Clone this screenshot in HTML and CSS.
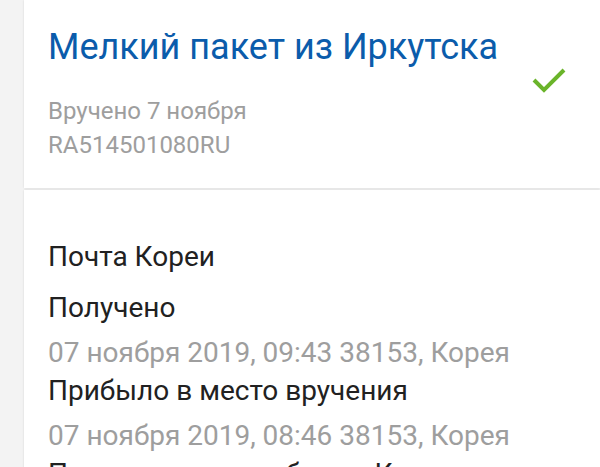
FILE: index.html
```html
<!DOCTYPE html>
<html lang="ru">
<head>
  <meta charset="UTF-8">
  <meta name="viewport" content="width=device-width, initial-scale=1.0">
  <title>Отслеживание</title>
  <link rel="stylesheet" href="styles.css">
</head>
<body>

  <div class="page">
    <div class="card head">
      <div class="info">
        <h1>Мелкий пакет из Иркутска</h1>
        <p class="sub">Вручено 7 ноября</p>
        <p class="sub">RA514501080RU</p>
      </div>
      <svg class="check" width="34" height="26" viewBox="0 0 34 26">
        <path d="M2 13 L12 23 L32 3" fill="none" stroke="#6ab42a" stroke-width="4"/>
      </svg>
    </div>

    <div class="card history">
      <h2>Почта Кореи</h2>
      <div class="event">
        <div class="what">Получено</div>
        <div class="when">07 ноября 2019, 09:43 38153, Корея</div>
      </div>
      <div class="event">
        <div class="what">Прибыло в место вручения</div>
        <div class="when">07 ноября 2019, 08:46 38153, Корея</div>
      </div>
      <div class="event">
        <div class="what">Покинуло место обмена Кореи</div>
        <div class="when">07 ноября 2019, 02:10 38153, Корея</div>
      </div>
    </div>
  </div>

</body>
</html>
```

FILE: styles.css
```css
* {
  margin: 0;
  padding: 0;
  box-sizing: border-box;
}
body {
  font-family: Roboto, "Noto Sans", sans-serif;
  background-color: #f3f3f3;
  height: 467px;
  overflow: hidden;
}

.page {
  margin-left: 24px;
  display: flex;
  flex-direction: column;
  gap: 2px;
}

.card {
  background-color: #fff;
  box-shadow: 0 0 2px rgba(0, 0, 0, 0.12);
}

.head {
  height: 188px;
  display: flex;
  justify-content: space-between;
  align-items: flex-start;
  padding: 24px 34px 0 24px;
}

h1 {
  font-size: 36px;
  font-weight: 400;
  color: #0b5cab;
  line-height: 46px;
  margin-bottom: 24px;
}

.sub {
  font-size: 24px;
  color: #9e9e9e;
  line-height: 34px;
}

.check {
  margin-top: 43px;
}

.history {
  padding: 49px 24px 0 24px;
}

h2 {
  font-size: 28px;
  font-weight: 400;
  color: #212121;
  line-height: 36px;
  margin-bottom: 15px;
}

.what {
  font-size: 28px;
  color: #212121;
  line-height: 36px;
}

.when {
  font-size: 28px;
  color: #9e9e9e;
  line-height: 36px;
  padding: 9px 0 2px;
}
```
